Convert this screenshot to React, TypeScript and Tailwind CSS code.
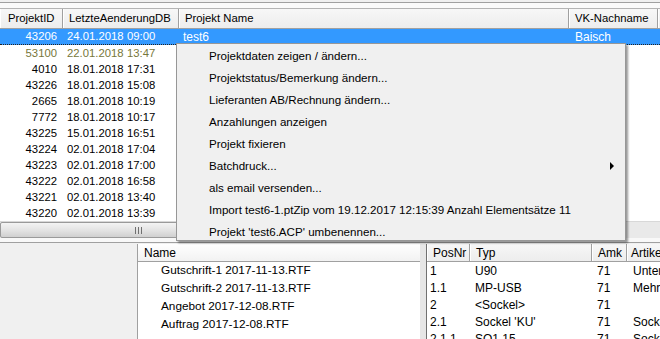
import React from "react";

const rows = [
  { id: "43206", d: "24.01.2018", t: "09:00", name: "test6", vk: "Baisch", sel: true },
  { id: "53100", d: "22.01.2018", t: "13:47", olive: true },
  { id: "4010", d: "18.01.2018", t: "17:31" },
  { id: "43226", d: "18.01.2018", t: "15:08" },
  { id: "2665", d: "18.01.2018", t: "10:19" },
  { id: "7772", d: "18.01.2018", t: "10:17" },
  { id: "43225", d: "15.01.2018", t: "16:51" },
  { id: "43224", d: "02.01.2018", t: "17:04" },
  { id: "43223", d: "02.01.2018", t: "17:00" },
  { id: "43222", d: "02.01.2018", t: "16:58" },
  { id: "43221", d: "02.01.2018", t: "13:40" },
  { id: "43220", d: "02.01.2018", t: "13:39" },
];

const menu = [
  "Projektdaten zeigen / ändern...",
  "Projektstatus/Bemerkung ändern...",
  "Lieferanten AB/Rechnung ändern...",
  "Anzahlungen anzeigen",
  "Projekt fixieren",
  "Batchdruck...",
  "als email versenden...",
  "Import test6-1.ptZip vom 19.12.2017 12:15:39 Anzahl Elementsätze 11",
  "Projekt 'test6.ACP' umbenennen...",
];

const files = [
  "Gutschrift-1 2017-11-13.RTF",
  "Gutschrift-2 2017-11-13.RTF",
  "Angebot 2017-12-08.RTF",
  "Auftrag 2017-12-08.RTF",
];

const pos = [
  ["1", "U90", "71", "Unterteil"],
  ["1.1", "MP-USB", "71", "Mehrfach"],
  ["2", "<Sockel>", "71", ""],
  ["2.1", "Sockel 'KU'", "71", "Sockel"],
  ["2.1.1", "SO1.15", "71", "Sockel"],
];

function HCell({ w, children, className = "" }: { w: string; children?: React.ReactNode; className?: string }) {
  return (
    <div
      className={`${w} ${className} h-full shrink-0 flex items-center bg-gradient-to-b from-[#f7f7f7] to-[#ededed] border-l border-l-white border-r border-r-[#a0a0a0] overflow-hidden whitespace-nowrap`}
    >
      {children}
    </div>
  );
}

export default function App() {
  return (
    <div
      className="relative w-[660px] h-[339px] overflow-hidden bg-[#f0f0f0] text-[11.3px] text-[#000]"
      style={{ fontFamily: '"Liberation Sans", Arial, sans-serif' }}
    >
      {/* top grid */}
      <div className="flex flex-col">
        <div className="h-[2px] bg-[#f0f0f0]" />
        <div className="h-px bg-[#a0a0a0]" />
        <div className="h-[5px] bg-[#fafafa]" />
        <div className="h-px bg-[#b4b4b4]" />
        <div className="h-[20px] flex border-b border-[#a0a0a0] bg-[#f0f0f0]">
          <HCell w="w-[63px]" className="pl-[7px]">ProjektID</HCell>
          <HCell w="w-[116px]" className="pl-[5px]">LetzteAenderungDB</HCell>
          <HCell w="w-[390px]" className="pl-[5px]">Projekt Name</HCell>
          <HCell w="w-[89px]" className="pl-[5px]">VK-Nachname</HCell>
          <HCell w="w-[20px]" />
        </div>
        <div className="bg-white">
          {rows.map((r, i) => (
            <div
              key={i}
              className={`h-[16px] flex items-center whitespace-nowrap ${
                r.sel ? "bg-[#3399ff] text-white border-b border-dotted border-[#222]" : r.olive ? "text-[#77773a]" : "text-[#000]"
              }`}
            >
              <div className="w-[57px] shrink-0 text-right">{r.id}</div>
              <div className="w-[10px] shrink-0" />
              <div className="w-[60px] shrink-0">{r.d}</div>
              <div className="w-[52px] shrink-0">{r.t}</div>
              <div className="w-[391px] shrink-0 pl-[4px] text-[12px]">{r.name ?? ""}</div>
              <div className="w-[80px] shrink-0 pl-[5px] text-[12px]">{r.vk ?? ""}</div>
            </div>
          ))}
        </div>
        {/* horizontal scrollbar */}
        <div className="h-[17px] flex bg-[#e9e9e9] border-t border-[#d8d8d8]">
          <div className="w-[276px] h-full rounded-[2px] border border-[#9a9a9a] bg-gradient-to-b from-[#f4f4f4] via-[#e4e4e4] to-[#d0d0d0] flex items-center justify-center gap-[2px]">
            <div className="w-px h-[7px] bg-[#707070]" />
            <div className="w-px h-[7px] bg-[#707070]" />
            <div className="w-px h-[7px] bg-[#707070]" />
          </div>
        </div>
        <div className="h-[4px] bg-[#f8f8f8]" />
        <div className="h-px bg-[#a0a0a0]" />
        <div className="h-px bg-[#f0f0f0]" />
      </div>

      {/* bottom panels */}
      <div className="flex h-[100px]">
        <div className="w-[138px] shrink-0 bg-[#f0f0f0] border-r border-[#a0a0a0]" />
        <div className="w-[282px] shrink-0 bg-white flex flex-col">
          <div className="h-[18px] flex items-center pl-[6px] text-[12px] border-b border-[#a0a0a0] bg-gradient-to-b from-[#ffffff] to-[#f2f2f2]">
            Name
          </div>
          {files.map((f) => (
            <div key={f} className="h-[18px] flex items-center pl-[23px] text-[11.8px] whitespace-nowrap">
              {f}
            </div>
          ))}
        </div>
        <div className="w-[7px] shrink-0 bg-[#e6e6e6] border-r border-[#707070]" />
        <div className="flex-1 bg-white flex flex-col overflow-hidden">
          <div className="h-[18px] flex border-b border-[#a0a0a0] text-[12px] whitespace-nowrap">
            <HCell w="w-[43px]" className="pl-[5px]">PosNr</HCell>
            <HCell w="w-[122px]" className="pl-[5px]">Typ</HCell>
            <HCell w="w-[35px]" className="pl-[5px]">Amk</HCell>
            <HCell w="w-[40px]" className="pl-[3px]">Artikel</HCell>
          </div>
          {pos.map((p, i) => (
            <div key={i} className="h-[17px] flex items-center text-[12px] whitespace-nowrap">
              <div className="w-[43px] shrink-0 pl-[3px]">{p[0]}</div>
              <div className="w-[122px] shrink-0 pl-[5px]">{p[1]}</div>
              <div className="w-[36px] shrink-0 pl-[5px]">{p[2]}</div>
              <div className="w-[40px] shrink-0 pl-[5px] overflow-hidden">{p[3]}</div>
            </div>
          ))}
        </div>
      </div>

      {/* context menu */}
      <div className="absolute left-[176px] top-[43px] w-[450px] h-[198px] bg-[#f0f0f0] border border-[#979797] shadow-[2px_2px_2px_rgba(0,0,0,0.4)] py-[1px] text-[11.6px]">
        {menu.map((m, i) => (
          <div key={i} className="h-[22px] flex items-center pl-[32px] relative whitespace-nowrap">
            {m}
            {i === 5 && (
              <svg className="absolute left-[433px] top-[7px]" width="4" height="8" viewBox="0 0 4 8">
                <path d="M0 0 L4 4 L0 8 Z" fill="#000" />
              </svg>
            )}
          </div>
        ))}
      </div>
    </div>
  );
}
